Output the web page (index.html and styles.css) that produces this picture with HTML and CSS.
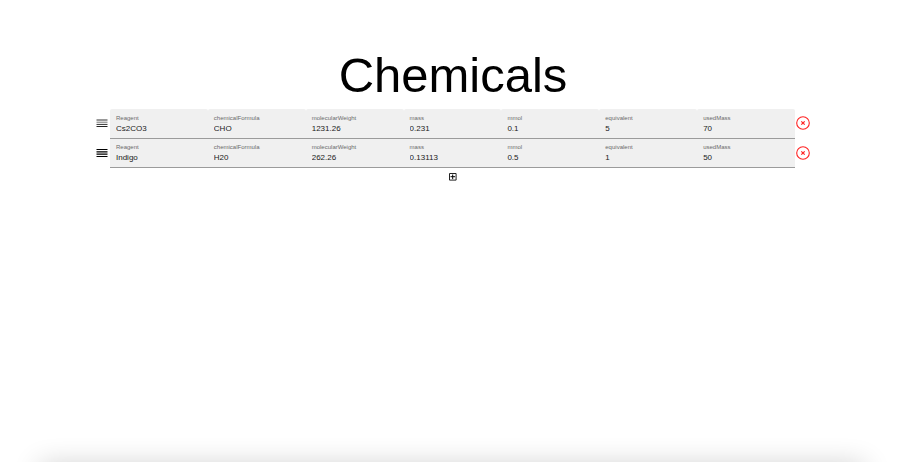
FILE: index.html
```html
<!DOCTYPE html>
<html lang="en">
<head>
<meta charset="utf-8">
<title>Chemicals</title>
<link rel="stylesheet" href="styles.css">
</head>
<body>
<main class="page">
  <h1 class="title">Chemicals</h1>
  <ul class="rows" id="rows"></ul>
  <button class="add" type="button" aria-label="Add chemical">
    <svg width="8" height="8" viewBox="0 0 8 8"><path d="M.5 .5h6.6v6.6h-6.6z" fill="none" stroke="#222"/><path d="M3.7 1.5v4.6M1.5 3.7h4.6" stroke="#000"/></svg>
  </button>
</main>
<div class="dock-shadow"></div>
<script src="script.js"></script>
</body>
</html>
```
FILE: styles.css
```css
* {
  box-sizing: border-box;
}

body {
  margin: 0;
  min-height: 100vh;
  position: relative;
  overflow: hidden;
  background: #fff;
  color: #000;
  font-family: "Liberation Sans", Arial, sans-serif;
}

.page {
  display: flex;
  flex-direction: column;
  align-items: center;
  padding: 47px 94px 0 96px;
}

.title {
  margin: 0 0 6px;
  font-size: 49px;
  line-height: 56px;
  font-weight: 400;
}

.rows {
  align-self: stretch;
  margin: 0;
  padding: 0;
  list-style: none;
}

.row {
  display: grid;
  grid-template-columns: 14px 1fr 15px;
  align-items: center;
}

.handle,
.remove,
.add {
  display: flex;
  padding: 0;
  border: 0;
  background: none;
}

.handle {
  cursor: grab;
}

.handle,
.remove {
  padding-bottom: 2px;
}

.remove {
  justify-content: flex-end;
}

.fields {
  display: grid;
  grid-template-columns: repeat(7, 1fr);
}

.field {
  display: flex;
  flex-direction: column;
  min-width: 0;
  padding: 5px 6px 3px;
  background: #f0f0f0;
  border-bottom: 1px solid #9b9b9b;
  border-radius: 2px 2px 0 0;
}

.row + .row .field {
  padding-top: 4px;
  border-radius: 0;
}

.label {
  color: #6b6b6b;
  font-size: 6px;
  line-height: 8px;
}

.input {
  width: 100%;
  height: 13px;
  padding: 0;
  border: 0;
  outline: 0;
  background: none;
  color: #212121;
  font: 8px/13px "Liberation Sans", Arial, sans-serif;
}

.add {
  margin-top: 5px;
}

.dock-shadow {
  position: absolute;
  left: 40px;
  right: 40px;
  bottom: -22px;
  height: 18px;
  box-shadow: 0 0 28px rgba(0, 0, 0, 0.24);
}
```
FILE: script.js
```js
const names = ["Reagent", "chemicalFormula", "molecularWeight", "mass", "mmol", "equivalent", "usedMass"];
const chemicals = [
  ["Cs2CO3", "CHO", "1231.26", "0.231", "0.1", "5", "70"],
  ["Indigo", "H20", "262.26", "0.13113", "0.5", "1", "50"]
];

const handleLines = [
  `<path d="M.5 1h11" stroke="#999" stroke-width="2"/><path d="M.5 3.2h11" stroke="#777"/><path d="M.5 5.4h11" stroke="#333"/><path d="M.5 7.5h11" stroke="#222"/>`,
  `<path d="M.5 .5h11M.5 2.8h11M.5 5.1h11M.5 7.5h11" stroke="#000" stroke-width="1.2"/>`
];

document.getElementById("rows").innerHTML = chemicals.map((values, r) => `
  <li class="row">
    <button class="handle" type="button" aria-label="Move row">
      <svg width="12" height="8" viewBox="0 0 12 8">${handleLines[r]}</svg>
    </button>
    <div class="fields">${names.map((name, c) => `
      <div class="field">
        <label class="label" for="f${r}-${c}">${name}</label>
        <input class="input" id="f${r}-${c}" type="text" value="${values[c]}">
      </div>`).join("")}
    </div>
    <button class="remove" type="button" aria-label="Remove row">
      <svg width="14" height="14" viewBox="0 0 14 14" fill="none" stroke="#f22"><circle cx="7" cy="7" r="6.3" stroke-width="1.1"/><path d="M5.3 5.3l3.4 3.4M8.7 5.3l-3.4 3.4" stroke-width="1.2"/></svg>
    </button>
  </li>`).join("");
```
